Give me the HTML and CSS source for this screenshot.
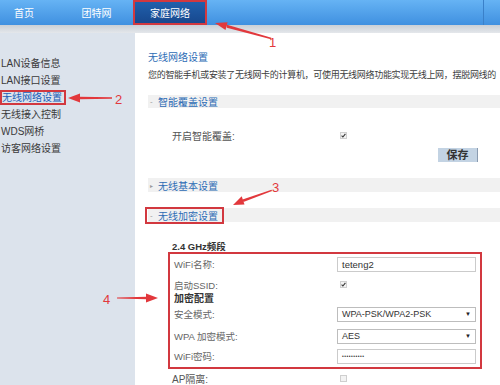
FILE: index.html
```html
<!DOCTYPE html>
<html>
<head>
	<meta charset="utf-8">
	<title>家庭网络 - 无线网络设置</title>
	<link rel="stylesheet" href="styles.css">
</head>
<body>
	<div class="page">
		<div class="topnav">
			<a class="tab tab-home">首页</a>
			<a class="tab tab-mid">团特网</a>
			<a class="tab tab-active">家庭网络</a>
			<span class="nav-fill"></span>
			<span class="nav-end"></span>
		</div>
		<div class="subbar"></div>

		<div class="layout">
			<ul class="sidebar">
				<li>LAN设备信息</li>
				<li>LAN接口设置</li>
				<li><span class="side-active">无线网络设置</span></li>
				<li>无线接入控制</li>
				<li>WDS网桥</li>
				<li>访客网络设置</li>
			</ul>

			<div class="content">
				<div class="page-title">无线网络设置</div>
				<div class="intro">您的智能手机或安装了无线网卡的计算机，可使用无线网络功能实现无线上网，摆脱网线的</div>

				<div class="section-bar bar-first"><span class="bar-mark">-</span>智能覆盖设置</div>
				<div class="option-row row-cover">
					<span class="option-label">开启智能覆盖:</span>
					<span class="check">
						<svg width="7" height="7" viewBox="0 0 7 7"><rect x="0.5" y="0.5" width="6" height="6" fill="#f3f3f3" stroke="#d0d0d0"/><path d="M1.6 3.6 L2.9 5 L5.4 1.8" fill="none" stroke="#333" stroke-width="1.1"/></svg>
					</span>
				</div>
				<div class="actions">
					<button class="save-btn">保存</button>
				</div>

				<div class="section-bar bar-basic"><span class="bar-mark mark-arrow">▸</span>无线基本设置</div>
				<div class="section-bar bar-secure"><span class="bar-boxed"><span class="bar-mark">-</span>无线加密设置</span></div>

				<div class="band-title">2.4 GHz频段</div>
				<div class="form-box">
					<div class="field f-name">
						<span class="field-label">WiFi名称:</span>
						<span class="text-input">teteng2</span>
					</div>
					<div class="field f-ssid">
						<span class="field-label">启动SSID:</span>
						<span class="check">
							<svg width="7" height="7" viewBox="0 0 7 7"><rect x="0.5" y="0.5" width="6" height="6" fill="#f3f3f3" stroke="#d0d0d0"/><path d="M1.6 3.6 L2.9 5 L5.4 1.8" fill="none" stroke="#333" stroke-width="1.1"/></svg>
						</span>
					</div>
					<div class="field-group">加密配置</div>
					<div class="field f-mode">
						<span class="field-label">安全模式:</span>
						<span class="select-box"><span>WPA-PSK/WPA2-PSK</span><span class="caret">▼</span></span>
					</div>
					<div class="field f-wpa">
						<span class="field-label">WPA 加密模式:</span>
						<span class="select-box"><span>AES</span><span class="caret">▼</span></span>
					</div>
					<div class="field f-pass">
						<span class="field-label">WiFi密码:</span>
						<span class="text-input pass-dots">••••••••••</span>
					</div>
				</div>
				<div class="option-row row-ap">
					<span class="option-label">AP隔离:</span>
					<span class="check">
						<svg width="7" height="7" viewBox="0 0 7 7"><rect x="0.5" y="0.5" width="6" height="6" fill="#f3f3f3" stroke="#cfcfcf"/></svg>
					</span>
				</div>
			</div>
		</div>

		<!-- callout arrows drawn over the page -->
		<svg class="marks" width="500" height="385" viewBox="0 0 500 385">
			<g fill="#e2383c">
				<polygon points="215,23 227.6,22.3 225.5,30.1"/>
				<polygon points="226.2,24.6 226.9,27.8 271,39.2 271.4,37.8"/>
				<text x="269" y="47" class="mark-num">1</text>

				<polygon points="68,98 80,93.5 80,102.5"/>
				<polygon points="79,96.8 79,99.2 112,98.7 112,97.3"/>
				<text x="115" y="104" class="mark-num">2</text>

				<polygon points="233,205 241.7,196.3 244.5,204.5"/>
				<polygon points="242.5,199.5 243.4,202 272,191 271.5,189.8"/>
				<text x="272" y="192" class="mark-num">3</text>

				<polygon points="158,298 146,293.5 146,302.5"/>
				<polygon points="147,296.8 147,299.2 117,298.6 117,297.4"/>
				<text x="103" y="304" class="mark-num">4</text>
			</g>
		</svg>
	</div>
</body>
</html>
```

FILE: styles.css
```css
body {
	margin: 0;
	font-family: "Liberation Sans", "Noto Sans CJK SC", sans-serif;
	font-size: 10px;
	color: #444;
	background-color: #dce3ec;
	overflow: hidden;
}

.page {
	position: relative;
	width: 500px;
	height: 385px;
	overflow: hidden;
}

.topnav {
	display: flex;
	height: 25px;
	background: linear-gradient(#66b3f4, #3f90e0);
}

.tab {
	display: flex;
	align-items: center;
	justify-content: center;
	height: 25px;
	color: white;
	font-size: 10px;
}

.tab-home {
	width: 60px;
	justify-content: flex-start;
	padding-left: 14px;
	box-sizing: border-box;
}

.tab-mid {
	width: 73px;
}

.tab-active {
	width: 74px;
	box-sizing: border-box;
	background: linear-gradient(#2160ac, #17488e);
	border: 2px solid #d2383f;
}

.nav-fill {
	width: 276px;
}

.nav-end {
	width: 1px;
	height: 25px;
	background-color: #3a80c9;
}

.subbar {
	height: 8px;
	background: linear-gradient(#c9cfd6, #e4e7eb);
}

.layout {
	display: flex;
	height: 352px;
}

.sidebar {
	width: 135px;
	margin: 0;
	padding: 22px 0 0 1px;
	box-sizing: border-box;
	list-style: none;
	background-color: #dce3ec;
}

.sidebar li {
	height: 17px;
	line-height: 17px;
	color: #3a3a3a;
	white-space: nowrap;
}

.side-active {
	display: inline-block;
	height: 11px;
	line-height: 11px;
	margin-left: -1px;
	padding: 0 2px 0 0;
	color: #2160b8;
	border: 2px solid #d2383f;
}

.content {
	flex: 1;
	min-width: 0;
	padding-left: 13px;
	background-color: white;
	overflow: hidden;
}

.page-title {
	margin-top: 18px;
	line-height: 14px;
	color: #2d6cb5;
}

.intro {
	margin-top: 3px;
	line-height: 14px;
	font-size: 9px;
	letter-spacing: -0.3px;
	color: #3c3c3c;
	white-space: nowrap;
}

.section-bar {
	display: flex;
	align-items: center;
	height: 14px;
	color: #2d6cb5;
	background-color: #f1f1f1;
}

.bar-first {
	margin-top: 13px;
	height: 13px;
}

.bar-basic,
.bar-secure {
	margin-top: 16px;
}

.bar-mark {
	width: 8px;
	padding-left: 2px;
	color: #9a9a9a;
	font-size: 8px;
}

.mark-arrow {
	font-size: 6px;
}

.bar-boxed {
	display: flex;
	align-items: center;
	height: 11px;
	padding-right: 3px;
	outline: 2px solid #d2383f;
	outline-offset: 1px;
}

.option-row {
	display: flex;
	align-items: center;
	height: 14px;
	padding-left: 24px;
}

.row-cover {
	margin-top: 20px;
}

.row-ap {
	margin-top: 2px;
}

.option-label {
	width: 165px;
	color: #555;
}

.check {
	display: flex;
	margin-left: 3px;
}

.actions {
	display: flex;
	justify-content: flex-end;
	margin-top: 6px;
	padding-right: 22px;
}

.save-btn {
	width: 40px;
	height: 14px;
	padding: 0;
	font-family: "Liberation Serif", "Noto Sans CJK SC", serif;
	font-size: 11px;
	font-weight: bold;
	line-height: 14px;
	color: #333;
	background-color: #c3d3e3;
	border: none;
	border-right: 1px solid #8a9bb0;
}

.band-title {
	margin-top: 19px;
	height: 11px;
	line-height: 11px;
	padding-left: 24px;
	font-size: 9.5px;
	font-weight: bold;
	color: #333;
}

.form-box {
	width: 314px;
	margin-left: 20px;
	padding: 2px 0 3px 2px;
	box-sizing: border-box;
	border: 2px solid #d2383f;
}

.field {
	display: flex;
	align-items: center;
	height: 16px;
}

.field-label {
	width: 165px;
	padding-left: 2px;
	box-sizing: border-box;
	color: #666;
	font-size: 9.5px;
	white-space: nowrap;
}

.f-ssid {
	margin-top: 5px;
	height: 15px;
}

.field-group {
	height: 13px;
	line-height: 13px;
	padding-left: 2px;
	font-weight: bold;
	color: #333;
}

.f-mode {
	margin-top: 1px;
}

.f-wpa {
	margin-top: 6px;
}

.f-pass {
	margin-top: 4px;
}

.text-input,
.select-box {
	display: flex;
	align-items: center;
	width: 139px;
	height: 15px;
	padding: 0 4px 0 4px;
	box-sizing: border-box;
	font-size: 9.5px;
	color: #333;
	background-color: white;
	border: 1px solid #cbcbcb;
}

.select-box {
	justify-content: space-between;
	font-size: 9px;
	border-color: #bdbdbd;
}

.caret {
	font-size: 6px;
	color: #222;
}

.pass-dots {
	font-size: 5px;
	letter-spacing: 0.5px;
}

.marks {
	position: absolute;
	left: 0;
	top: 0;
	pointer-events: none;
}

.mark-num {
	font-family: "Liberation Sans", sans-serif;
	font-size: 13px;
}
```
